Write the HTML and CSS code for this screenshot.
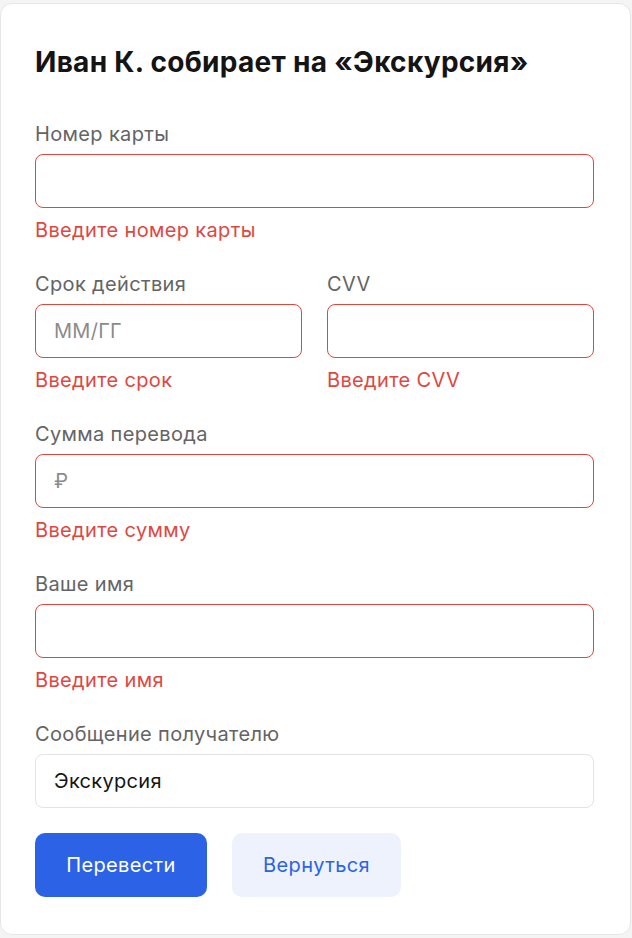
FILE: index.html
```html
<!DOCTYPE html>
<html lang="ru">
<head>
<meta charset="utf-8">
<link rel="stylesheet" href="styles.css">
</head>
<body>
<div class="card">
  <h1 class="title">Иван К. собирает на «Экскурсия»</h1>
  <div class="field">
    <div class="label">Номер карты</div>
    <div class="input error"></div>
    <div class="err">Введите номер карты</div>
  </div>
  <div class="row">
    <div class="field">
      <div class="label">Срок действия</div>
      <div class="input error"><span class="ph">ММ/ГГ</span></div>
      <div class="err">Введите срок</div>
    </div>
    <div class="field">
      <div class="label">CVV</div>
      <div class="input error"></div>
      <div class="err">Введите CVV</div>
    </div>
  </div>
  <div class="field">
    <div class="label">Сумма перевода</div>
    <div class="input error"><span class="ph">₽</span></div>
    <div class="err">Введите сумму</div>
  </div>
  <div class="field">
    <div class="label">Ваше имя</div>
    <div class="input error"></div>
    <div class="err">Введите имя</div>
  </div>
  <div class="field last">
    <div class="label">Сообщение получателю</div>
    <div class="input"><span class="val">Экскурсия</span></div>
  </div>
  <div class="buttons">
    <button class="btn primary">Перевести</button>
    <button class="btn secondary">Вернуться</button>
  </div>
</div>
</body>
</html>
```
FILE: styles.css
```css
html, body {
  margin: 0;
  padding: 0;
  background: #f4f4f5;
}
body {
  font-family: Inter, "Noto Sans", sans-serif;
  padding-top: 3px;
}
.card {
  box-sizing: border-box;
  width: 631px;
  height: 932px;
  background: #ffffff;
  border: 1px solid #e6e6e8;
  border-radius: 12px;
  padding: 42px 36px 36px 34px;
}
.title {
  margin: 0 0 44px;
  font-size: 28px;
  line-height: 32px;
  font-weight: 700;
  color: #141414;
  letter-spacing: 0.3px;
}
.field {
  display: flex;
  flex-direction: column;
  margin-bottom: 30px;
}
.field.last {
  margin-bottom: 25px;
}
.label {
  font-size: 20px;
  line-height: 24px;
  color: #646466;
  margin-bottom: 8px;
  letter-spacing: 0.35px;
}
.input {
  box-sizing: border-box;
  height: 54px;
  border: 1px solid #e3e3e6;
  border-radius: 8px;
  display: flex;
  align-items: center;
  padding-left: 18px;
  font-size: 20px;
  letter-spacing: 0.3px;
}
.input.error {
  border-color: #e0473f;
}
.ph {
  color: #8b8b8e;
}
.val {
  color: #141414;
}
.err {
  margin-top: 10px;
  font-size: 20px;
  line-height: 24px;
  color: #e0473f;
  letter-spacing: 0.35px;
}
.row {
  display: grid;
  grid-template-columns: 267px 267px;
  column-gap: 25px;
}
.buttons {
  display: flex;
  gap: 25px;
}
.btn {
  height: 64px;
  border: none;
  border-radius: 10px;
  font-family: Inter, "Noto Sans", sans-serif;
  font-size: 20px;
  letter-spacing: 0.35px;
  padding: 0;
}
.primary {
  width: 172px;
  background: #2c63e6;
  color: #ffffff;
}
.secondary {
  width: 169px;
  background: #eef2fd;
  color: #2c63e6;
}
```
